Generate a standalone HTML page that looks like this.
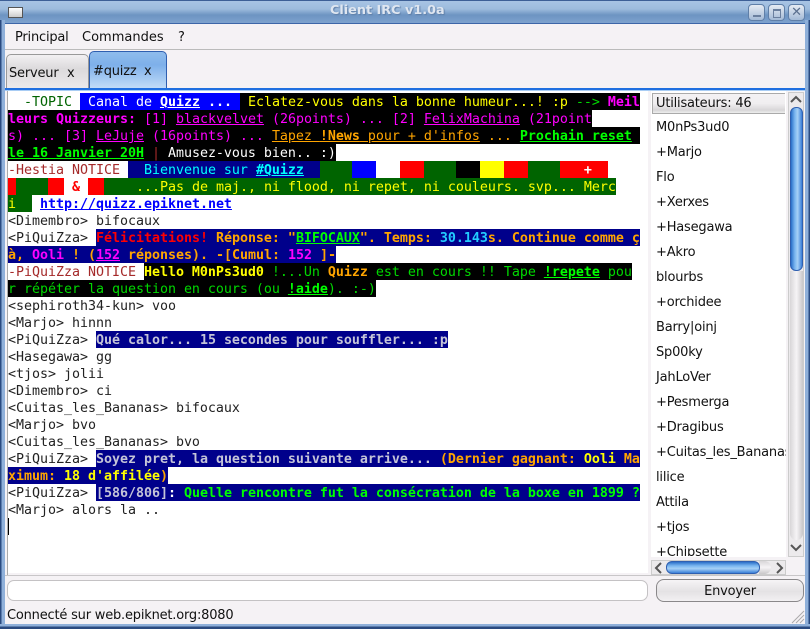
<!DOCTYPE html>
<html><head><meta charset="utf-8"><style>
html,body{margin:0;padding:0;background:#fff}
#w{position:relative;width:810px;height:629px;overflow:hidden;background:#f5f2f5;font-family:"DejaVu Sans","Liberation Sans",sans-serif;font-size:13px;letter-spacing:-.2px;color:#111}
.a{position:absolute}
#chat{position:absolute;left:8px;top:91px;width:640px;height:482px;padding-top:2px;box-sizing:border-box;background:#fff;overflow:hidden}
.l{height:17px;line-height:19px;white-space:pre;font-family:"DejaVu Sans Mono","Liberation Mono",monospace;font-size:13.33px;letter-spacing:-.027px;color:#222}
.l span{display:inline-block;height:17px;vertical-align:top}
b{font-weight:bold}u{text-decoration:underline}
.bk{background:#000}.nv{background:#00008b}.bl{background:#0000ff}.gn{background:#006400}.rd{background:#f00}.wh{background:#fff}.ye{background:#ff0}
.Y{color:#ff0}.M{color:#f0f}.G{color:#0f0}.W{color:#fff}.O{color:#ffa500}.R{color:#f00}.C{color:#0ff}.S{color:#c4c4d8}.N{color:#a52a2a}.T{color:#006400}.LC{color:#22ccff}.DG{color:#00d800}
.l i{font-style:normal}
.u{position:absolute;left:656px;height:17px;line-height:17px;white-space:pre}
.tb{position:absolute;top:4px;width:15px;height:15px;border:1px solid #5f7fa8;border-radius:4px;background:linear-gradient(#e6ebf3,#a4bad6)}
</style></head><body><div id="w">
<div class="a" style="left:0;top:0;width:810px;height:23px;background:linear-gradient(#a8c4e4 0,#9dbbdd 8px,#6d94c2 14px,#7ea2ce 22px);border-top:1px solid #3d5f96;box-sizing:border-box"></div>
<div class="a" style="left:330px;top:3px;width:116px;white-space:nowrap;color:#dfe6f0;font-weight:bold;font-size:12.8px;letter-spacing:0;line-height:16px;text-shadow:1px 1px 1px #5f7fa8">Client IRC v1.0a</div>
<div class="a" style="left:8px;top:7px;width:13px;height:9px;border:1px solid #555;background:linear-gradient(#fff,#ccc)"></div>
<div class="tb" style="left:748px"><div class="a" style="left:4px;top:10px;width:8px;height:2px;background:#6a7f9e"></div></div>
<div class="tb" style="left:768px"><div class="a" style="left:4px;top:4px;width:6px;height:6px;border:1px solid #6a7f9e;border-top-width:2px"></div></div>
<div class="tb" style="left:788px"><div class="a" style="left:0;top:0;width:15px;text-align:center;line-height:15px;color:#5a6f8e;font-weight:bold;font-size:13px">✕</div></div>
<div class="a" style="left:0;top:20px;width:5px;height:609px;background:linear-gradient(90deg,#2a4a80 0,#2a4a80 1px,#8fb0da 2px,#8fb0da 5px)"></div>
<div class="a" style="left:805px;top:20px;width:5px;height:609px;background:linear-gradient(90deg,#8fb0da 0,#8fb0da 3px,#2a4a80 4px)"></div>
<div class="a" style="left:0;top:624px;width:810px;height:5px;background:linear-gradient(#8fb0da 0,#8fb0da 2px,#2a4a80 3px)"></div>
<div class="a" style="left:5px;top:23px;width:800px;height:1px;background:#3d66a8"></div>
<div class="a" style="left:5px;top:49px;width:800px;height:1px;background:#bbb"></div>
<div class="a" style="left:15px;top:29px;line-height:17px">Principal</div>
<div class="a" style="left:82px;top:29px;line-height:17px;letter-spacing:0">Commandes</div>
<div class="a" style="left:178px;top:29px;line-height:17px">?</div>

<div class="a" style="left:6px;top:54px;width:83px;height:35px;box-sizing:border-box;border:1px solid #999;border-bottom:0;border-radius:5px 5px 0 0;background:linear-gradient(#f2f0f2,#dcdadc 40%,#eceaec)"></div>
<div class="a" style="left:9px;top:65px;line-height:17px">Serveur</div>
<div class="a" style="left:67px;top:65px;line-height:17px">x</div>
<div class="a" style="left:89px;top:51px;width:78px;height:38px;box-sizing:border-box;border:1px solid #2f5fb0;border-bottom:0;border-radius:5px 5px 0 0;background:linear-gradient(#8fbcec,#7eb0ea 35%,#c4def8)"></div>
<div class="a" style="left:93px;top:63px;line-height:17px">#quizz</div>
<div class="a" style="left:144px;top:63px;line-height:17px">x</div>
<div class="a" style="left:5px;top:88px;width:800px;height:2px;background:#1f6fe0"></div>
<div class="a" style="left:5px;top:90px;width:800px;height:1px;background:#a8ccf4"></div>
<div class="a" style="left:7px;top:91px;width:1px;height:484px;background:#aaa"></div>

<div id="chat">
<div class="l"><span class="wh T">  -TOPIC </span><span class="bl W"> Canal de <b><u>Quizz</u> ...</b> </span><span class="bk Y"> Eclatez-vous dans la bonne humeur...! :p <i class="DG">--&gt;</i> <b class="M">Meil</b></span></div>
<div class="l"><span class="bk M"><b>leurs Quizzeurs:</b> [1] <u>blackvelvet</u> (26points) ... [2] <u>FelixMachina</u> (21point</span></div>
<div class="l"><span class="bk M">s) ... [3] <u>LeJuje</u> (16points) ... <u class="O">Tapez <b>!News</b> pour + d'infos</u> <i class="O">...</i> <b class="G"><u>Prochain reset</u></b> </span></div>
<div class="l"><span class="bk G"><b><u>le 16 Janvier 20H</u></b> <i class="N">|</i> <i class="W">Amusez-vous bien.. :)</i></span></div>
<div class="l"><span class="wh N">-Hestia NOTICE </span><span class="nv C">  Bienvenue sur <b><u>#Quizz</u></b>  </span><span class="gn" style="width:32px"></span><span class="bl" style="width:24px"></span><span class="wh" style="width:24px"></span><span class="rd" style="width:24px"></span><span class="gn" style="width:32px"></span><span class="bk" style="width:24px"></span><span class="ye" style="width:24px"></span><span class="rd" style="width:24px"></span><span class="gn" style="width:32px"></span><span class="rd W" style="width:48px"><b>   +</b></span></div>
<div class="l"><span class="rd" style="width:8px"></span><span class="gn" style="width:32px"></span><span class="rd" style="width:16px"></span><span class="wh R" style="width:24px"><b> &amp;</b></span><span class="rd" style="width:16px"></span><span class="gn Y" style="width:512px">    ...Pas de maj., ni flood, ni repet, ni couleurs. svp... Merc</span></div>
<div class="l"><span class="gn Y" style="width:24px">i</span><span class="wh" style="color:#00f"><b> <u>http://quizz.epiknet.net</u></b></span></div>
<div class="l">&lt;Dimembro&gt; bifocaux</div>
<div class="l">&lt;PiQuiZza&gt; <span class="nv O"><b><i class="R">Félicitations!</i> Réponse: "<u class="G">BIFOCAUX</u>". Temps: <i class="LC">30.143</i>s. Continue comme ç</b></span></div>
<div class="l"><span class="nv O"><b>à, <i class="M">Ooli</i> ! (<u class="M">152</u> réponses). -[Cumul: <i class="M">152</i> ]-</b></span></div>
<div class="l"><span class="wh N">-PiQuiZza NOTICE </span><span class="bk DG"><b class="Y">Hello M0nPs3ud0</b> !...Un <b class="O">Quizz</b> est en cours !! Tape <b class="G"><u>!repete</u></b> pou</span></div>
<div class="l"><span class="bk DG">r répéter la question en cours (ou <b class="G"><u>!aide</u></b>). :-)</span></div>
<div class="l">&lt;sephiroth34-kun&gt; voo</div>
<div class="l">&lt;Marjo&gt; hinnn</div>
<div class="l">&lt;PiQuiZza&gt; <span class="nv S"><b>Qué calor... 15 secondes pour souffler... :p</b></span></div>
<div class="l">&lt;Hasegawa&gt; gg</div>
<div class="l">&lt;tjos&gt; jolii</div>
<div class="l">&lt;Dimembro&gt; ci</div>
<div class="l">&lt;Cuitas_les_Bananas&gt; bifocaux</div>
<div class="l">&lt;Marjo&gt; bvo</div>
<div class="l">&lt;Cuitas_les_Bananas&gt; bvo</div>
<div class="l">&lt;PiQuiZza&gt; <span class="nv S"><b>Soyez pret, la question suivante arrive... <i class="O">(Dernier gagnant: <i class="Y">Ooli</i> Ma</i></b></span></div>
<div class="l"><span class="nv O"><b>ximum: <i class="Y">18 d'affilée</i>)</b></span></div>
<div class="l">&lt;PiQuiZza&gt; <span class="nv G"><i class="S"><b>[586/806]</b></i><b class="W">:</b> <b>Quelle rencontre fut la consécration de la boxe en 1899 ?</b></span></div>
<div class="l">&lt;Marjo&gt; alors la ..</div>
<div class="a" style="left:0;top:427px;width:1px;height:17px;background:#000"></div>
</div>

<div class="a" style="left:651px;top:91px;width:135px;height:466px;background:#fff;overflow:hidden"></div>
<div class="a" style="left:652px;top:93px;width:133px;height:21px;box-sizing:border-box;border:1px solid #aaa;border-right:0;background:linear-gradient(#f4f2f4 0,#f0eef0 50%,#d8d6d8 85%,#eee 100%)"></div>
<div class="u" style="top:95px">Utilisateurs: 46</div>
<div class="a" style="left:651px;top:114px;width:135px;height:443px;overflow:hidden">
<div class="u" style="left:5px;top:5px">M0nPs3ud0</div>
<div class="u" style="left:5px;top:30px">+Marjo</div>
<div class="u" style="left:5px;top:55px">Flo</div>
<div class="u" style="left:5px;top:80px">+Xerxes</div>
<div class="u" style="left:5px;top:105px">+Hasegawa</div>
<div class="u" style="left:5px;top:130px">+Akro</div>
<div class="u" style="left:5px;top:155px">blourbs</div>
<div class="u" style="left:5px;top:180px">+orchidee</div>
<div class="u" style="left:5px;top:205px">Barry|oinj</div>
<div class="u" style="left:5px;top:230px">Sp00ky</div>
<div class="u" style="left:5px;top:255px">JahLoVer</div>
<div class="u" style="left:5px;top:280px">+Pesmerga</div>
<div class="u" style="left:5px;top:305px">+Dragibus</div>
<div class="u" style="left:5px;top:330px">+Cuitas_les_Bananas</div>
<div class="u" style="left:5px;top:355px">lilice</div>
<div class="u" style="left:5px;top:380px">Attila</div>
<div class="u" style="left:5px;top:405px">+tjos</div>
<div class="u" style="left:5px;top:430px;height:12px;overflow:hidden">+Chipsette</div>
</div>

<div class="a" style="left:788px;top:92px;width:16px;height:465px;background:#eceaec;border:1px solid #ccc;box-sizing:border-box"></div>
<svg class="a" style="left:789px;top:93px" width="14" height="14"><path d="M2 9L7 4L12 9" fill="none" stroke="#555" stroke-width="2"/></svg>
<div class="a" style="left:790px;top:107px;width:13px;height:164px;border-radius:6px;background:linear-gradient(90deg,#2a6fc8,#7ab6f0 35%,#a6d0f6 60%,#3a7fd8);border:1px solid #2f5fb0;box-sizing:border-box"></div>
<div class="a" style="left:790px;top:271px;width:13px;height:269px;border-radius:0 0 7px 7px;background:linear-gradient(90deg,#d8d6d8,#f6f4f6 50%,#c8c6c8)"></div>
<svg class="a" style="left:789px;top:541px" width="14" height="14"><path d="M2 4L7 9L12 4" fill="none" stroke="#555" stroke-width="2"/></svg>

<div class="a" style="left:651px;top:560px;width:135px;height:15px;background:#eceaec;border:1px solid #ccc;box-sizing:border-box"></div>
<svg class="a" style="left:652px;top:561px" width="14" height="14"><path d="M9 2L4 7L9 12" fill="none" stroke="#555" stroke-width="2"/></svg>
<div class="a" style="left:759px;top:561px;width:12px;height:13px;border-radius:0 7px 7px 0;background:linear-gradient(#d8d6d8,#f6f4f6 50%,#c8c6c8)"></div>
<svg class="a" style="left:772px;top:561px" width="14" height="14"><path d="M5 2L10 7L5 12" fill="none" stroke="#555" stroke-width="2"/></svg>
<div class="a" style="left:666px;top:561px;width:94px;height:13px;border-radius:6px;background:linear-gradient(#2a6fc8,#7ab6f0 35%,#a6d0f6 60%,#3a7fd8);border:1px solid #2f5fb0;box-sizing:border-box"></div>

<div class="a" style="left:5px;top:575px;width:800px;height:1px;background:#c8c6c8"></div>
<div class="a" style="left:7px;top:580px;width:641px;height:21px;box-sizing:border-box;border:1px solid #c4c2c4;border-radius:7px;background:#fff"></div>
<div class="a" style="left:656px;top:579px;width:148px;height:23px;box-sizing:border-box;border:1px solid #8a888a;border-radius:8px;background:linear-gradient(#f6f4f6,#e4e2e4 55%,#f2f0f2)"></div>
<div class="a" style="left:656px;top:583px;width:148px;text-align:center;line-height:17px">Envoyer</div>
<div class="a" style="left:7px;top:607px;line-height:17px">Connecté sur web.epiknet.org:8080</div>
<svg class="a" style="left:788px;top:607px" width="17" height="17"><path d="M16 4L4 16M16 8L8 16M16 12L12 16" stroke="#aaa" fill="none"/></svg>
</div></body></html>
